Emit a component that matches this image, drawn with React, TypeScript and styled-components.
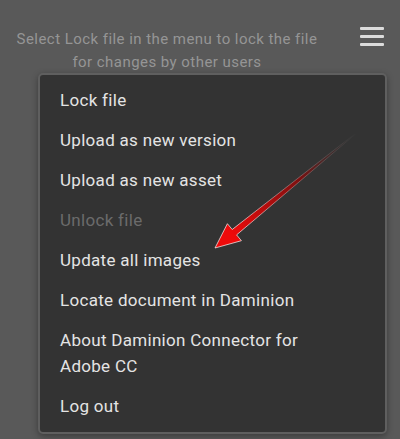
import styled, { createGlobalStyle } from "styled-components";

const GlobalStyle = createGlobalStyle`
  html, body {
    margin: 0;
    padding: 0;
    background: #595959;
  }
  body {
    font-family: Roboto, "Liberation Sans", Arial, sans-serif;
  }
`;

const items: { label: string; disabled?: boolean }[] = [
  { label: "Lock file" },
  { label: "Upload as new version" },
  { label: "Upload as new asset" },
  { label: "Unlock file", disabled: true },
  { label: "Update all images" },
  { label: "Locate document in Daminion" },
  { label: "About Daminion Connector for Adobe CC" },
  { label: "Log out" },
];

export default function App() {
  return (
    <>
      <GlobalStyle />
      <Page>
        <Header>
          <Hint>
            Select Lock file in the menu to lock the file
            <br />
            for changes by other users
          </Hint>
          <MenuButton aria-label="menu">
            <Bar />
            <Bar />
            <Bar />
          </MenuButton>
        </Header>
        <Menu>
          {items.map((item) => (
            <MenuItem key={item.label} $disabled={item.disabled}>
              {item.label}
            </MenuItem>
          ))}
        </Menu>
        <Arrow width="400" height="439" viewBox="0 0 400 439">
          <defs>
            <linearGradient
              id="arrowFill"
              gradientUnits="userSpaceOnUse"
              x1="356"
              y1="133"
              x2="232"
              y2="235"
            >
              <stop offset="0" stopColor="#333" stopOpacity="0" />
              <stop offset="0.45" stopColor="#7a1010" />
              <stop offset="1" stopColor="#ee0a0a" />
            </linearGradient>
            <linearGradient
              id="arrowEdge"
              gradientUnits="userSpaceOnUse"
              x1="356"
              y1="133"
              x2="232"
              y2="235"
            >
              <stop offset="0" stopColor="#fff" stopOpacity="0" />
              <stop offset="0.5" stopColor="#fff" stopOpacity="0.35" />
              <stop offset="1" stopColor="#fff" stopOpacity="0.85" />
            </linearGradient>
          </defs>
          <polygon
            points="356.3,133.4 356.0,133.0 232.2,229.5 227.4,223.7 215,248 241.4,240.7 236.6,234.9"
            fill="url(#arrowFill)"
            stroke="url(#arrowEdge)"
            strokeWidth="0.8"
          />
        </Arrow>
      </Page>
    </>
  );
}

const Page = styled.div`
  position: relative;
  width: 400px;
  height: 439px;
  overflow: hidden;
  background: #595959;
`;

const Header = styled.div`
  display: flex;
  align-items: flex-start;
  padding-top: 28px;
  height: 45px;
`;

const Hint = styled.div`
  width: 334px;
  text-align: center;
  font-size: 15px;
  letter-spacing: 0.45px;
  line-height: 23px;
  color: #959595;
`;

const MenuButton = styled.div`
  display: flex;
  flex-direction: column;
  gap: 5px;
  margin-left: 26px;
  margin-top: -1px;
  width: 24px;
`;

const Bar = styled.span`
  display: block;
  height: 3px;
  border-radius: 1px;
  background: #dcdcdc;
`;

const Menu = styled.div`
  margin-left: 38px;
  width: 345px;
  padding: 5px 0 6px;
  background: #333333;
  border: 2px solid #5f5f5f;
  border-radius: 5px;
  box-shadow: 0 2px 6px rgba(0, 0, 0, 0.35);
`;

const MenuItem = styled.div<{ $disabled?: boolean }>`
  padding: 7px 60px 7px 20px;
  font-size: 17px;
  letter-spacing: 0.3px;
  line-height: 26px;
  color: ${({ $disabled }) => ($disabled ? "#6b6b6b" : "#e4e4e4")};
`;

const Arrow = styled.svg`
  position: absolute;
  left: 0;
  top: 0;
  pointer-events: none;
`;
